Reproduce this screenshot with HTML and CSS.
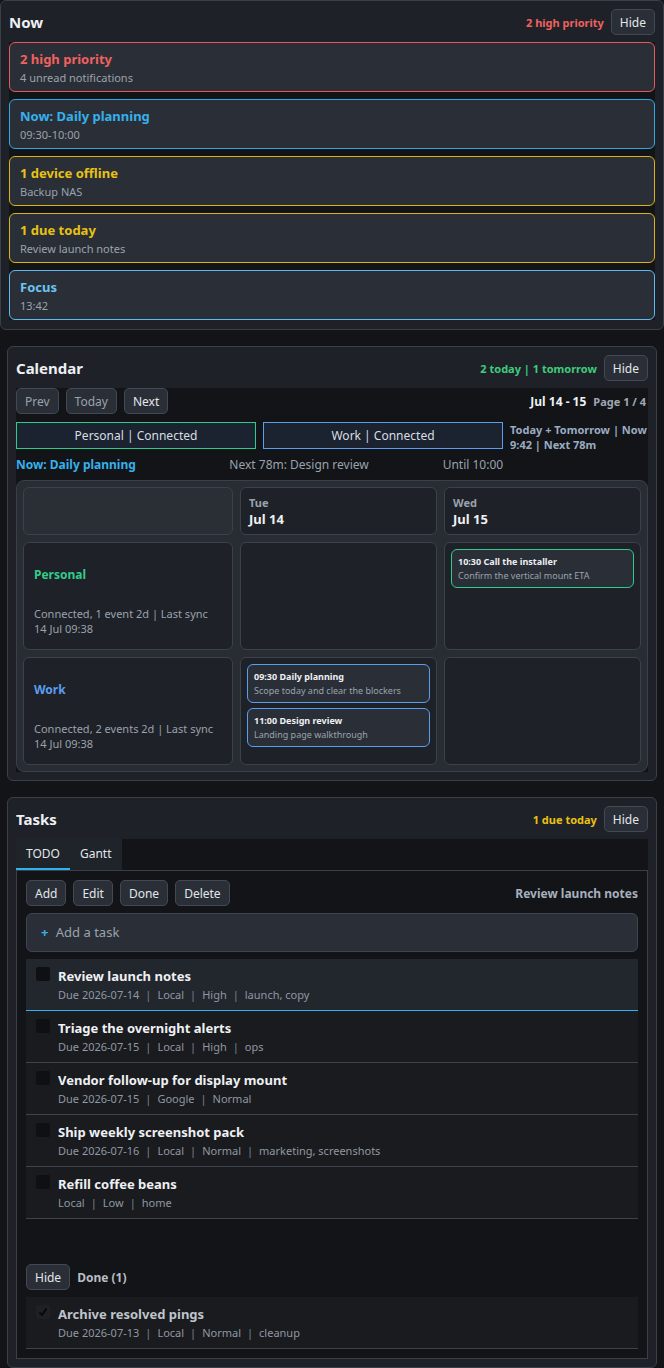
FILE: index.html
```html
<!DOCTYPE html>
<html lang="en">
<head>
    <meta charset="UTF-8">
    <meta name="viewport" content="width=device-width, initial-scale=1.0">
    <title>Dashboard</title>
    <link rel="stylesheet" href="styles.css">
</head>
<body>
    <section class="panel panel-now">
        <header class="panel-head">
            <h2 class="panel-title">Now</h2>
            <div class="head-right">
                <span class="badge red">2 high priority</span>
                <button class="btn">Hide</button>
            </div>
        </header>
        <div class="alerts">
            <div class="alert alert-red">
                <div class="alert-title">2 high priority</div>
                <div class="alert-sub">4 unread notifications</div>
            </div>
            <div class="alert alert-blue">
                <div class="alert-title">Now: Daily planning</div>
                <div class="alert-sub">09:30-10:00</div>
            </div>
            <div class="alert alert-yellow">
                <div class="alert-title">1 device offline</div>
                <div class="alert-sub">Backup NAS</div>
            </div>
            <div class="alert alert-yellow">
                <div class="alert-title">1 due today</div>
                <div class="alert-sub">Review launch notes</div>
            </div>
            <div class="alert alert-focus">
                <div class="alert-title">Focus</div>
                <div class="alert-sub">13:42</div>
            </div>
        </div>
    </section>

    <section class="panel">
        <header class="panel-head">
            <h2 class="panel-title">Calendar</h2>
            <div class="head-right">
                <span class="badge green">2 today | 1 tomorrow</span>
                <button class="btn">Hide</button>
            </div>
        </header>
        <div class="cal-body">
            <div class="cal-toolbar">
                <div class="btn-row">
                    <button class="btn btn-muted">Prev</button>
                    <button class="btn btn-muted">Today</button>
                    <button class="btn">Next</button>
                </div>
                <div class="cal-range">
                    <span class="range">Jul 14 - 15</span>
                    <span class="page">Page 1 / 4</span>
                </div>
            </div>
            <div class="cal-sources">
                <div class="source source-personal">Personal | Connected</div>
                <div class="source source-work">Work | Connected</div>
                <div class="cal-info">Today + Tomorrow | Now 9:42 | Next 78m</div>
            </div>
            <div class="cal-now">
                <span class="now-current">Now: Daily planning</span>
                <span>Next 78m: Design review</span>
                <span>Until 10:00</span>
            </div>
            <div class="cal-grid">
                <div class="cell cell-corner"></div>
                <div class="cell day-head">
                    <div class="dow">Tue</div>
                    <div class="date">Jul 14</div>
                </div>
                <div class="cell day-head">
                    <div class="dow">Wed</div>
                    <div class="date">Jul 15</div>
                </div>

                <div class="cell cal-name">
                    <div class="cal-label personal">Personal</div>
                    <div class="cal-meta">Connected, 1 event 2d | Last sync 14 Jul 09:38</div>
                </div>
                <div class="cell day-cell"></div>
                <div class="cell day-cell">
                    <div class="event event-personal">
                        <div class="event-title">10:30 Call the installer</div>
                        <div class="event-sub">Confirm the vertical mount ETA</div>
                    </div>
                </div>

                <div class="cell cal-name">
                    <div class="cal-label work">Work</div>
                    <div class="cal-meta">Connected, 2 events 2d | Last sync 14 Jul 09:38</div>
                </div>
                <div class="cell day-cell">
                    <div class="event event-work">
                        <div class="event-title">09:30 Daily planning</div>
                        <div class="event-sub">Scope today and clear the blockers</div>
                    </div>
                    <div class="event event-work">
                        <div class="event-title">11:00 Design review</div>
                        <div class="event-sub">Landing page walkthrough</div>
                    </div>
                </div>
                <div class="cell day-cell"></div>
            </div>
        </div>
    </section>

    <section class="panel">
        <header class="panel-head">
            <h2 class="panel-title">Tasks</h2>
            <div class="head-right">
                <span class="badge yellow">1 due today</span>
                <button class="btn">Hide</button>
            </div>
        </header>
        <div class="tabs">
            <div class="tab active">TODO</div>
            <div class="tab">Gantt</div>
        </div>
        <div class="tab-body">
            <div class="task-toolbar">
                <div class="btn-row">
                    <button class="btn">Add</button>
                    <button class="btn">Edit</button>
                    <button class="btn">Done</button>
                    <button class="btn">Delete</button>
                </div>
                <span class="selected-task">Review launch notes</span>
            </div>
            <div class="add-task"><span class="plus">+</span> Add a task</div>

            <ul class="task-list">
                <li class="task selected">
                    <span class="check"></span>
                    <div>
                        <div class="task-title">Review launch notes</div>
                        <div class="task-meta">Due 2026-07-14<span class="sep">|</span>Local<span class="sep">|</span>High<span class="sep">|</span>launch, copy</div>
                    </div>
                </li>
                <li class="task">
                    <span class="check"></span>
                    <div>
                        <div class="task-title">Triage the overnight alerts</div>
                        <div class="task-meta">Due 2026-07-15<span class="sep">|</span>Local<span class="sep">|</span>High<span class="sep">|</span>ops</div>
                    </div>
                </li>
                <li class="task">
                    <span class="check"></span>
                    <div>
                        <div class="task-title">Vendor follow-up for display mount</div>
                        <div class="task-meta">Due 2026-07-15<span class="sep">|</span>Google<span class="sep">|</span>Normal</div>
                    </div>
                </li>
                <li class="task">
                    <span class="check"></span>
                    <div>
                        <div class="task-title">Ship weekly screenshot pack</div>
                        <div class="task-meta">Due 2026-07-16<span class="sep">|</span>Local<span class="sep">|</span>Normal<span class="sep">|</span>marketing, screenshots</div>
                    </div>
                </li>
                <li class="task">
                    <span class="check"></span>
                    <div>
                        <div class="task-title">Refill coffee beans</div>
                        <div class="task-meta">Local<span class="sep">|</span>Low<span class="sep">|</span>home</div>
                    </div>
                </li>
            </ul>

            <div class="done-head">
                <button class="btn">Hide</button>
                <span class="done-label">Done (1)</span>
            </div>
            <ul class="task-list">
                <li class="task done">
                    <span class="check checked">
                        <svg width="12" height="12" viewBox="0 0 12 12"><path d="M2.5 6.5 L5 9 L9.5 2.5" fill="none" stroke="#050506" stroke-width="1.6"/></svg>
                    </span>
                    <div>
                        <div class="task-title">Archive resolved pings</div>
                        <div class="task-meta">Due 2026-07-13<span class="sep">|</span>Local<span class="sep">|</span>Normal<span class="sep">|</span>cleanup</div>
                    </div>
                </li>
            </ul>
        </div>
    </section>
</body>
</html>
```

FILE: styles.css
```css
* {
    box-sizing: border-box;
}
body {
    margin: 0;
    background-color: #131417;
    font-family: "Noto Sans", "DejaVu Sans", sans-serif;
    color: #eef0f3;
}
.panel {
    margin: 16px 7px 0;
    padding: 8px;
    background: #1e2128;
    border: 1px solid #3a3f48;
    border-radius: 6px;
}
.panel-now {
    margin: 0;
    padding-bottom: 9px;
}
.panel-head {
    display: flex;
    align-items: center;
    justify-content: space-between;
    height: 26px;
    margin-bottom: 7px;
}
.panel-title {
    margin: 0;
    font-size: 15px;
    font-weight: 700;
    color: #eef0f3;
}
.head-right {
    display: flex;
    align-items: center;
    gap: 7px;
}
.badge {
    font-size: 11px;
    font-weight: 700;
}
.red { color: #f0615f; }
.green { color: #3fcb7c; }
.yellow { color: #e8c213; }

.btn {
    height: 26px;
    padding: 0 8px;
    font-family: "Noto Sans", sans-serif;
    font-size: 12px;
    color: #e3e6ea;
    background: #2a2f37;
    border: 1px solid #434954;
    border-radius: 5px;
}
.btn-muted {
    color: #9aa2ac;
}
.btn-row {
    display: flex;
    gap: 7px;
}

/* now */
.alerts {
    display: flex;
    flex-direction: column;
    gap: 7px;
    background: #131417;
}
.alert {
    padding: 7px 10px 6px;
    background: #2a2f37;
    border: 1px solid;
    border-radius: 6px;
}
.alert-title {
    font-size: 13px;
    font-weight: 700;
    line-height: 18px;
}
.alert-sub {
    margin-top: 2px;
    font-size: 11px;
    line-height: 15px;
    color: #9aa2ac;
}
.alert-red { border-color: #e35a5c; }
.alert-red .alert-title { color: #f0615f; }
.alert-blue { border-color: #2ea9e3; }
.alert-blue .alert-title { color: #35b1ec; }
.alert-yellow { border-color: #d9b414; }
.alert-yellow .alert-title { color: #e8c213; }
.alert-focus { border-color: #5db9ee; }
.alert-focus .alert-title { color: #6cc4f3; }

/* calendar */
.cal-body {
    background: #131417;
}
.cal-toolbar {
    display: flex;
    align-items: center;
    justify-content: space-between;
    padding-right: 2px;
}
.cal-range {
    display: flex;
    align-items: baseline;
    gap: 7px;
}
.range {
    font-size: 12px;
    font-weight: 700;
    color: #eef0f3;
}
.page {
    font-size: 11px;
    font-weight: 700;
    color: #a0a8b3;
}
.cal-sources {
    display: grid;
    grid-template-columns: 240px 240px 1fr;
    gap: 7px;
    align-items: start;
    margin-top: 8px;
    height: 30px;
}
.source {
    height: 27px;
    line-height: 25px;
    text-align: center;
    font-size: 12px;
    color: #d9dde2;
    background: #1b2330;
    border: 1px solid;
}
.source-personal { border-color: #2ecb8a; }
.source-work { border-color: #5a9ef0; }
.cal-info {
    font-size: 11px;
    font-weight: 700;
    line-height: 15px;
    color: #9aabc2;
}
.cal-now {
    display: grid;
    grid-template-columns: repeat(3, 1fr);
    gap: 8px;
    margin-top: 5px;
    font-size: 12px;
    line-height: 16px;
    color: #9aa2ac;
}
.now-current {
    font-weight: 700;
    color: #35b1ec;
}
.cal-grid {
    display: grid;
    grid-template-columns: 210px 1fr 1fr;
    grid-template-rows: 48px 108px 108px;
    gap: 7px;
    margin-top: 7px;
    padding: 6px;
    background: #282c33;
    border: 1px solid #3a3f48;
    border-radius: 8px;
}
.cell {
    background: #1e2128;
    border: 1px solid #3c414a;
    border-radius: 6px;
}
.cell-corner {
    background: #2a2e35;
}
.day-head {
    padding: 7px 8px;
}
.dow {
    font-size: 11px;
    font-weight: 700;
    line-height: 15px;
    color: #9aa2ac;
}
.date {
    font-size: 13px;
    font-weight: 700;
    line-height: 18px;
    color: #eef0f3;
}
.cal-name {
    padding: 23px 14px 0 10px;
}
.cal-label {
    font-size: 12px;
    font-weight: 700;
    line-height: 17px;
}
.cal-label.personal { color: #33cc8c; }
.cal-label.work { color: #5a9ef0; }
.cal-meta {
    margin-top: 23px;
    font-size: 11px;
    line-height: 15px;
    color: #9aa2ac;
}
.day-cell {
    display: flex;
    flex-direction: column;
    gap: 5px;
    padding: 6px;
}
.event {
    padding: 5px 6px 4px;
    background: #2a2f37;
    border: 1px solid;
    border-radius: 6px;
}
.event-personal { border-color: #2ecb8a; }
.event-work { border-color: #5a9ef0; }
.event-title {
    font-size: 9px;
    font-weight: 700;
    line-height: 13px;
    color: #eef0f3;
}
.event-sub {
    margin-top: 1px;
    font-size: 9px;
    line-height: 14px;
    color: #9aa2ac;
}

/* tasks */
.tabs {
    display: flex;
    height: 31px;
    background: #131417;
}
.tab {
    padding: 0 10px;
    font-size: 12px;
    line-height: 30px;
    color: #e3e6ea;
    background: #1f232a;
}
.tab.active {
    box-shadow: inset 0 -2px 0 #2eb3f0;
}
.tab-body {
    padding: 9px;
    background: #131417;
    border: 1px solid #3a3f48;
}
.task-toolbar {
    display: flex;
    align-items: center;
    justify-content: space-between;
}
.selected-task {
    font-size: 12px;
    font-weight: 700;
    color: #a5b0bd;
}
.add-task {
    height: 39px;
    margin-top: 7px;
    padding-left: 14px;
    line-height: 37px;
    font-size: 13px;
    color: #9aa2ac;
    background: #2a2f37;
    border: 1px solid #3f4550;
    border-radius: 6px;
}
.plus {
    margin-right: 4px;
    font-weight: 700;
    color: #35b1ec;
}
.task-list {
    margin: 7px 0 0;
    padding: 0;
    list-style: none;
}
.task {
    display: flex;
    gap: 8px;
    padding: 8px 10px;
    background: #1a1b1e;
    border-bottom: 1px solid #3d424b;
}
.task.selected {
    background: #22262d;
    border-bottom-color: #2eb3f0;
}
.check {
    flex: none;
    width: 14px;
    height: 14px;
    background: #0f1013;
    border-radius: 2px;
}
.check.checked {
    display: flex;
    align-items: center;
    justify-content: center;
    background: #1f2023;
}
.task-title {
    font-size: 13px;
    font-weight: 700;
    line-height: 18px;
    color: #eef0f3;
}
.task-meta {
    margin-top: 2px;
    font-size: 11px;
    line-height: 15px;
    color: #8f98a3;
}
.sep {
    margin: 0 6px;
    color: #7c848f;
}
.task.done .task-title {
    color: #bfc4cb;
}
.done-head {
    display: flex;
    align-items: center;
    gap: 7px;
    margin-top: 45px;
}
.done-label {
    font-size: 12px;
    font-weight: 700;
    color: #b8bec6;
}
```
